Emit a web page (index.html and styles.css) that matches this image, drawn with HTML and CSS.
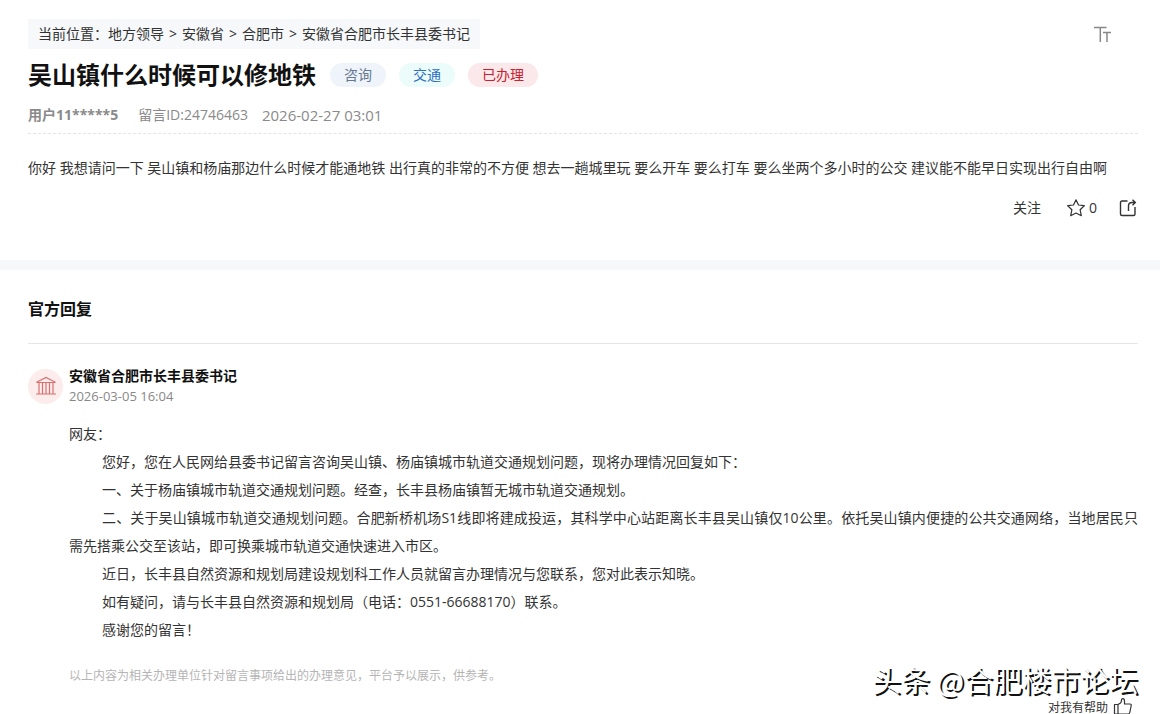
FILE: index.html
```html
<!DOCTYPE html>
<html lang="zh-CN">
<head>
    <meta charset="UTF-8">
    <meta name="viewport" content="width=device-width, initial-scale=1.0">
    <title>吴山镇什么时候可以修地铁</title>
    <link rel="stylesheet" href="styles.css">
</head>
<body>
    <main>
        <section class="message">
            <div class="top-row">
                <nav class="breadcrumb">
                    <span>当前位置：<a href="#">地方领导</a></span>
                    <span>&gt;</span>
                    <a href="#">安徽省</a>
                    <span>&gt;</span>
                    <a href="#">合肥市</a>
                    <span>&gt;</span>
                    <a href="#">安徽省合肥市长丰县委书记</a>
                </nav>
                <button class="font-size-button" aria-label="字号">
                    <svg width="18" height="16" viewBox="0 0 18 16" fill="none" stroke="currentColor" stroke-width="1.5">
                        <path d="M0 1.500h12.500M6.300 1.500V16M9 6.500h8M13 6.500V16"/>
                    </svg>
                </button>
            </div>
            <div class="title-row">
                <h1>吴山镇什么时候可以修地铁</h1>
                <span class="tag tag-type">咨询</span>
                <span class="tag tag-field">交通</span>
                <span class="tag tag-state">已办理</span>
            </div>
            <div class="meta">
                <strong>用户11*****5</strong>
                <span>留言ID:24746463</span>
                <time>2026-02-27 03:01</time>
            </div>
            <p class="message-text">你好 我想请问一下 吴山镇和杨庙那边什么时候才能通地铁 出行真的非常的不方便 想去一趟城里玩 要么开车 要么打车 要么坐两个多小时的公交 建议能不能早日实现出行自由啊</p>
            <div class="actions">
                <button>关注</button>
                <button class="star-button">
                    <svg width="18" height="18" viewBox="0 0 18 18" fill="none" stroke="currentColor" stroke-width="1.2" stroke-linejoin="round">
                        <path d="M9 .8l2.500 5.200 5.800.7-4.200 4 1.200 6L9 14l-5.300 2.700 1.200-6-4.200-4 5.800-.7z"/>
                    </svg>
                    0
                </button>
                <button aria-label="分享">
                    <svg width="18" height="18" viewBox="0 0 18 18" fill="none" stroke="currentColor" stroke-width="1.4">
                        <path d="M8.500 2H3Q1.500 2 1.500 3.500v11.500q0 1.500 1.500 1.500h11.500q1.500 0 1.500-1.500V8M9.500 12V7q0-3.500 3.500-3.500H16.500M13.500.8L16.300 3.500l-2.800 2.700"/>
                    </svg>
                </button>
            </div>
        </section>

        <section class="reply">
            <h2>官方回复</h2>
            <div class="reply-head">
                <span class="avatar">
                    <svg width="20" height="20" viewBox="0 0 20 20" fill="none" stroke="currentColor" stroke-width="1.2">
                        <path d="M1 6L10 1.500 19 6v.5H1zM0 18h20M3 6.500V18M6.500 6.500V18M10 6.500V18M13.500 6.500V18M17 6.500V18"/>
                    </svg>
                </span>
                <div>
                    <h3>安徽省合肥市长丰县委书记</h3>
                    <time>2026-03-05 16:04</time>
                </div>
            </div>
            <div class="reply-body">
                <p class="greeting">网友：</p>
                <p>您好，您在人民网给县委书记留言咨询吴山镇、杨庙镇城市轨道交通规划问题，现将办理情况回复如下：</p>
                <p>一、关于杨庙镇城市轨道交通规划问题。经查，长丰县杨庙镇暂无城市轨道交通规划。</p>
                <p>二、关于吴山镇城市轨道交通规划问题。合肥新桥机场S1线即将建成投运，其科学中心站距离长丰县吴山镇仅10公里。依托吴山镇内便捷的公共交通网络，当地居民只需先搭乘公交至该站，即可换乘城市轨道交通快速进入市区。</p>
                <p>近日，长丰县自然资源和规划局建设规划科工作人员就留言办理情况与您联系，您对此表示知晓。</p>
                <p>如有疑问，请与长丰县自然资源和规划局（电话：0551-66688170）联系。</p>
                <p>感谢您的留言！</p>
            </div>
            <p class="notice">以上内容为相关办理单位针对留言事项给出的办理意见，平台予以展示，供参考。</p>
            <button class="helpful-button">
                对我有帮助
                <svg width="20" height="17" viewBox="0 0 20 17" fill="none" stroke="currentColor" stroke-width="1.2" stroke-linejoin="round">
                    <path d="M1.500 6.500h3.500v9.500H1.500zM5 6.500l2.500-1.500Q8.500 4 8.500 2q0-1.300 1.300-1.300 1.700 0 1.700 2.300v3h5.500q1.500 0 1.200 1.500l-1.400 7q-.3 1.500-1.800 1.500H5"/>
                </svg>
            </button>
        </section>
    </main>
    <div class="watermark">头条 @合肥楼市论坛</div>
</body>
</html>
```

FILE: styles.css
```css
body {
    margin: 0;
    overflow-x: hidden;
    font-family: "Open Sans", "Noto Sans CJK SC", sans-serif;
    font-size: 14px;
    line-height: 20px;
    color: #333;
    background: #f6f8fa;
    text-spacing-trim: space-all;
}

h1, h2, h3, p {
    margin: 0;
}

a {
    color: inherit;
    text-decoration: none;
}

button {
    display: flex;
    align-items: center;
    padding: 0;
    border: none;
    background: none;
    font: inherit;
    color: inherit;
    cursor: pointer;
}

.message,
.reply {
    padding: 0 22px 0 28px;
    background: white;
}

.message {
    padding-top: 19px;
    padding-bottom: 42px;
    margin-bottom: 10px;
}

.top-row {
    display: flex;
    justify-content: space-between;
    align-items: center;
    padding-right: 26px;
}

.breadcrumb {
    display: flex;
    gap: 5px;
    padding: 5px 10px;
    background: #f6f8fa;
}

.font-size-button {
    color: #888;
}

.title-row {
    display: flex;
    align-items: center;
    gap: 13px;
    margin-top: 8px;
}

h1 {
    margin-right: 1px;
    font-size: 24px;
    line-height: 36px;
    color: #111;
}

.tag {
    padding: 2px 14px;
    border-radius: 12px;
}

.tag-type {
    color: #66788f;
    background: #eff4fb;
}

.tag-field {
    color: #2f6fc0;
    background: #ebfcfa;
}

.tag-state {
    color: #c8202f;
    background: #fae8ea;
}

.meta {
    display: flex;
    gap: 14px;
    padding: 12px 0 8px;
    border-bottom: 1px dashed #e4e4e4;
    color: #8a8a8a;
}

.meta strong {
    margin-right: 6px;
}

.meta time {
    font-size: 15px;
}

.message-text {
    margin-top: 24px;
}

.actions {
    display: flex;
    justify-content: flex-end;
    align-items: center;
    gap: 22px;
    margin-top: 20px;
    padding-right: 1px;
}

.star-button {
    gap: 4px;
    margin-left: 4px;
}

.reply {
    padding-top: 24px;
}

h2 {
    padding-bottom: 18px;
    border-bottom: 1px solid #e6e6e6;
    font-size: 16px;
    line-height: 31px;
    color: #111;
}

.reply-head {
    display: flex;
    align-items: center;
    gap: 6px;
    margin-top: 22px;
}

.avatar {
    display: flex;
    align-items: center;
    justify-content: center;
    width: 35px;
    height: 35px;
    border-radius: 50%;
    color: #d9706e;
    background: #fdecec;
}

h3 {
    font-size: 14px;
    line-height: 20px;
    color: #111;
}

.reply-head time {
    display: block;
    font-size: 13px;
    color: #888;
}

.reply-body {
    margin: 14px 0 0 41px;
    line-height: 28px;
    text-align: justify;
}

.reply-body p {
    text-indent: 33px;
}

.reply-body .greeting {
    text-indent: 0;
}

.notice {
    margin: 22px 0 0 41px;
    font-size: 12px;
    color: #b5b5b5;
}

.helpful-button {
    align-items: flex-start;
    gap: 5px;
    margin: 12px 5px 0 auto;
    font-size: 12px;
}

.watermark {
    position: absolute;
    right: 22px;
    bottom: 13px;
    font-family: "Noto Sans CJK SC", sans-serif;
    font-size: 29px;
    line-height: 44px;
    color: white;
    text-shadow: 2px 2px 0 #111;
}
```
